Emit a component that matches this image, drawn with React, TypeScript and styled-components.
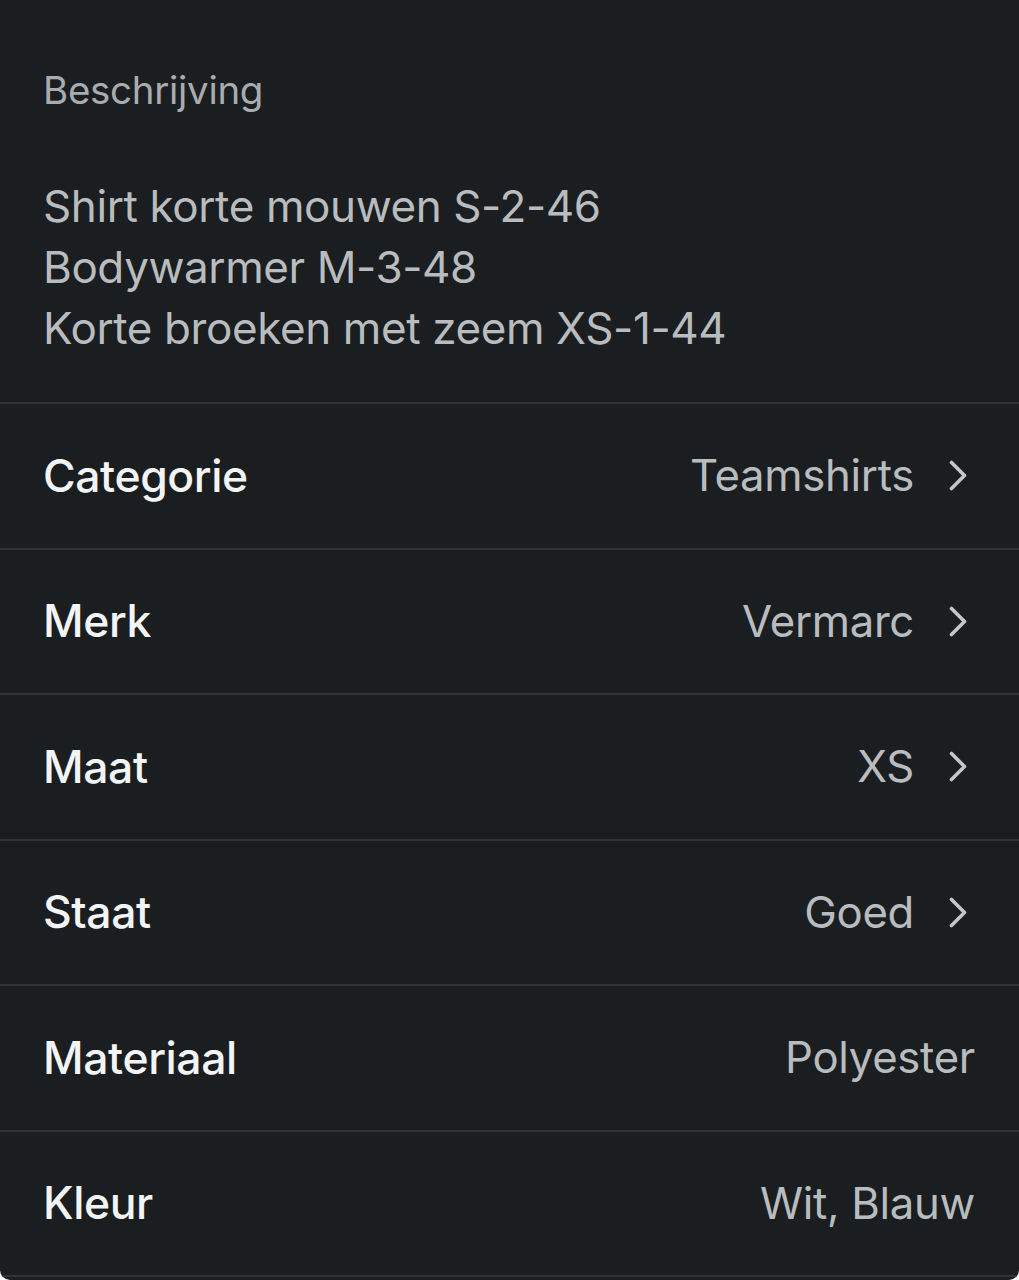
import styled, { createGlobalStyle } from 'styled-components';

const GlobalStyle = createGlobalStyle`
  body {
    margin: 0;
    background: #ffffff;
    font-family: Inter, "Noto Sans", sans-serif;
    -webkit-font-smoothing: antialiased;
  }
`;

interface Detail {
  label: string;
  value: string;
  link?: boolean;
}

const details: Detail[] = [
  { label: 'Categorie', value: 'Teamshirts', link: true },
  { label: 'Merk', value: 'Vermarc', link: true },
  { label: 'Maat', value: 'XS', link: true },
  { label: 'Staat', value: 'Goed', link: true },
  { label: 'Materiaal', value: 'Polyester' },
  { label: 'Kleur', value: 'Wit, Blauw' },
];

const descriptionLines = ['Shirt korte mouwen S-2-46', 'Bodywarmer M-3-48', 'Korte broeken met zeem XS-1-44'];

const Chevron = () => (
  <ChevronIcon viewBox="0 0 18 31" aria-hidden>
    <path d="M2.5 2.5 L15.5 15.5 L2.5 28.5" />
  </ChevronIcon>
);

const App = () => {
  return (
    <>
      <GlobalStyle />
      <Panel>
        <Description>
          <Title>Beschrijving</Title>
          <Body>
            {descriptionLines.map((line) => (
              <div key={line}>{line}</div>
            ))}
          </Body>
        </Description>
        <List>
          {details.map((d) => (
            <Row key={d.label}>
              <Label>{d.label}</Label>
              <ValueWrap>
                <Value>{d.value}</Value>
                {d.link && <Chevron />}
              </ValueWrap>
            </Row>
          ))}
        </List>
      </Panel>
    </>
  );
};

export default App;

const Panel = styled.div`
  width: 1019px;
  height: 1280px;
  background: #1b1e20;
  border-bottom-left-radius: 10px;
  border-bottom-right-radius: 10px;
  overflow: hidden;
`;

const Description = styled.section`
  padding: 60px 43px 43px;
  border-bottom: 2px solid #303335;
`;

const Title = styled.div`
  font-size: 38.5px;
  line-height: 60px;
  color: #a9acaf;
  letter-spacing: -0.3px;
`;

const Body = styled.div`
  margin-top: 56px;
  font-size: 44px;
  line-height: 61px;
  color: #b9bcbf;
  letter-spacing: -0.4px;
`;

const List = styled.ul`
  margin: 0;
  padding: 0;
  list-style: none;
`;

const Row = styled.li`
  box-sizing: border-box;
  height: 145.5px;
  display: flex;
  align-items: center;
  justify-content: space-between;
  padding: 0 44px 0 43px;
  border-bottom: 2px solid #303335;
`;

const Label = styled.span`
  font-size: 44.5px;
  font-weight: 500;
  color: #f3f4f5;
  letter-spacing: -0.4px;
`;

const ValueWrap = styled.span`
  display: flex;
  align-items: center;
  gap: 35px;
`;

const Value = styled.span`
  font-size: 43.7px;
  color: #b9bcbf;
  letter-spacing: -0.3px;
`;

const ChevronIcon = styled.svg`
  width: 18px;
  height: 31px;
  margin-right: 8px;
  fill: none;
  stroke: #c4c6c8;
  stroke-width: 3.6;
  stroke-linecap: round;
  stroke-linejoin: round;
`;
